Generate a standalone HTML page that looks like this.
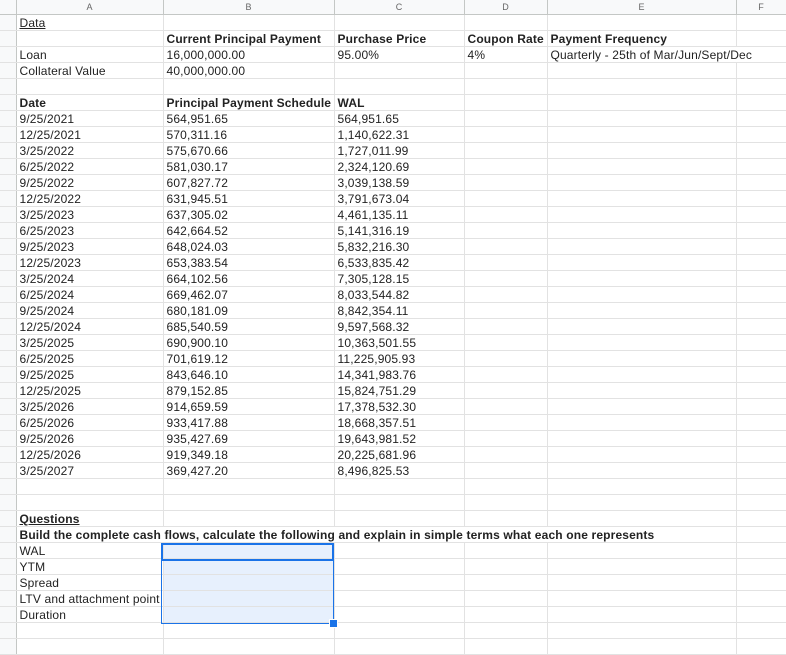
<!DOCTYPE html>
<html><head><meta charset="utf-8"><style>
body{margin:0;background:#fff;width:786px;height:645px;overflow:hidden;font-family:"Liberation Sans",Arial,sans-serif;}
table{border-collapse:collapse;table-layout:fixed;position:absolute;left:0;top:0;width:786px;}
td{height:15px;padding:0 0 0 3px;border-right:1px solid #e2e2e2;border-bottom:1px solid #e2e2e2;font-size:12px;letter-spacing:0.15px;color:#222;white-space:nowrap;overflow:visible;vertical-align:bottom;line-height:14px;box-sizing:content-box;}
tr.h td{background:#f8f9fa;color:#666;font-size:9px;letter-spacing:0;text-align:center;border-right:1px solid #c4c7c5;border-bottom:1px solid #c4c7c5;height:14px;padding:0;vertical-align:middle;}
td.g{background:#f8f9fa;border-right:1px solid #c4c7c5;padding:0;}
.b{font-weight:bold;}
.u{text-decoration:underline;}
td.s{background:#e7f0fd;}
td.nr{border-right-color:transparent;}
.sel{position:absolute;border:1px solid #1a73e8;}
</style></head><body>
<table>
<colgroup><col style="width:16px"><col style="width:147px"><col style="width:171px"><col style="width:130px"><col style="width:83px"><col style="width:189px"><col style="width:50px"></colgroup>
<tr class="h"><td></td><td>A</td><td>B</td><td>C</td><td>D</td><td>E</td><td>F</td></tr>
<tr><td class="g"></td><td class="u">Data</td><td></td><td></td><td></td><td></td><td></td></tr>
<tr><td class="g"></td><td></td><td class="b">Current Principal Payment</td><td class="b">Purchase Price</td><td class="b">Coupon Rate</td><td class="b">Payment Frequency</td><td></td></tr>
<tr><td class="g"></td><td>Loan</td><td>16,000,000.00</td><td>95.00%</td><td>4%</td><td class="nr">Quarterly - 25th of Mar/Jun/Sept/Dec</td><td></td></tr>
<tr><td class="g"></td><td>Collateral Value</td><td>40,000,000.00</td><td></td><td></td><td></td><td></td></tr>
<tr><td class="g"></td><td></td><td></td><td></td><td></td><td></td><td></td></tr>
<tr><td class="g"></td><td class="b">Date</td><td class="b">Principal Payment Schedule</td><td class="b">WAL</td><td></td><td></td><td></td></tr>
<tr><td class="g"></td><td>9/25/2021</td><td>564,951.65</td><td>564,951.65</td><td></td><td></td><td></td></tr>
<tr><td class="g"></td><td>12/25/2021</td><td>570,311.16</td><td>1,140,622.31</td><td></td><td></td><td></td></tr>
<tr><td class="g"></td><td>3/25/2022</td><td>575,670.66</td><td>1,727,011.99</td><td></td><td></td><td></td></tr>
<tr><td class="g"></td><td>6/25/2022</td><td>581,030.17</td><td>2,324,120.69</td><td></td><td></td><td></td></tr>
<tr><td class="g"></td><td>9/25/2022</td><td>607,827.72</td><td>3,039,138.59</td><td></td><td></td><td></td></tr>
<tr><td class="g"></td><td>12/25/2022</td><td>631,945.51</td><td>3,791,673.04</td><td></td><td></td><td></td></tr>
<tr><td class="g"></td><td>3/25/2023</td><td>637,305.02</td><td>4,461,135.11</td><td></td><td></td><td></td></tr>
<tr><td class="g"></td><td>6/25/2023</td><td>642,664.52</td><td>5,141,316.19</td><td></td><td></td><td></td></tr>
<tr><td class="g"></td><td>9/25/2023</td><td>648,024.03</td><td>5,832,216.30</td><td></td><td></td><td></td></tr>
<tr><td class="g"></td><td>12/25/2023</td><td>653,383.54</td><td>6,533,835.42</td><td></td><td></td><td></td></tr>
<tr><td class="g"></td><td>3/25/2024</td><td>664,102.56</td><td>7,305,128.15</td><td></td><td></td><td></td></tr>
<tr><td class="g"></td><td>6/25/2024</td><td>669,462.07</td><td>8,033,544.82</td><td></td><td></td><td></td></tr>
<tr><td class="g"></td><td>9/25/2024</td><td>680,181.09</td><td>8,842,354.11</td><td></td><td></td><td></td></tr>
<tr><td class="g"></td><td>12/25/2024</td><td>685,540.59</td><td>9,597,568.32</td><td></td><td></td><td></td></tr>
<tr><td class="g"></td><td>3/25/2025</td><td>690,900.10</td><td>10,363,501.55</td><td></td><td></td><td></td></tr>
<tr><td class="g"></td><td>6/25/2025</td><td>701,619.12</td><td>11,225,905.93</td><td></td><td></td><td></td></tr>
<tr><td class="g"></td><td>9/25/2025</td><td>843,646.10</td><td>14,341,983.76</td><td></td><td></td><td></td></tr>
<tr><td class="g"></td><td>12/25/2025</td><td>879,152.85</td><td>15,824,751.29</td><td></td><td></td><td></td></tr>
<tr><td class="g"></td><td>3/25/2026</td><td>914,659.59</td><td>17,378,532.30</td><td></td><td></td><td></td></tr>
<tr><td class="g"></td><td>6/25/2026</td><td>933,417.88</td><td>18,668,357.51</td><td></td><td></td><td></td></tr>
<tr><td class="g"></td><td>9/25/2026</td><td>935,427.69</td><td>19,643,981.52</td><td></td><td></td><td></td></tr>
<tr><td class="g"></td><td>12/25/2026</td><td>919,349.18</td><td>20,225,681.96</td><td></td><td></td><td></td></tr>
<tr><td class="g"></td><td>3/25/2027</td><td>369,427.20</td><td>8,496,825.53</td><td></td><td></td><td></td></tr>
<tr><td class="g"></td><td></td><td></td><td></td><td></td><td></td><td></td></tr>
<tr><td class="g"></td><td></td><td></td><td></td><td></td><td></td><td></td></tr>
<tr><td class="g"></td><td class="b u">Questions</td><td></td><td></td><td></td><td></td><td></td></tr>
<tr><td class="g"></td><td class="b nr">Build the complete cash flows, calculate the following and explain in simple terms what each one represents</td><td class="nr"></td><td class="nr"></td><td class="nr"></td><td></td><td></td></tr>
<tr><td class="g"></td><td>WAL</td><td class="s"></td><td></td><td></td><td></td><td></td></tr>
<tr><td class="g"></td><td>YTM</td><td class="s"></td><td></td><td></td><td></td><td></td></tr>
<tr><td class="g"></td><td>Spread</td><td class="s"></td><td></td><td></td><td></td><td></td></tr>
<tr><td class="g"></td><td>LTV and attachment point</td><td class="s"></td><td></td><td></td><td></td><td></td></tr>
<tr><td class="g"></td><td>Duration</td><td class="s"></td><td></td><td></td><td></td><td></td></tr>
<tr><td class="g"></td><td></td><td></td><td></td><td></td><td></td><td></td></tr>
<tr><td class="g"></td><td></td><td></td><td></td><td></td><td></td><td></td></tr>
</table>
<div class="sel" style="left:161px;top:543px;width:171px;height:79px;"></div>
<div class="sel" style="left:161px;top:543px;width:169px;height:14px;border-width:2px;"></div>
<div style="position:absolute;left:329px;top:619px;width:7px;height:7px;background:#1a73e8;border:1px solid #fff;"></div>
</body></html>
